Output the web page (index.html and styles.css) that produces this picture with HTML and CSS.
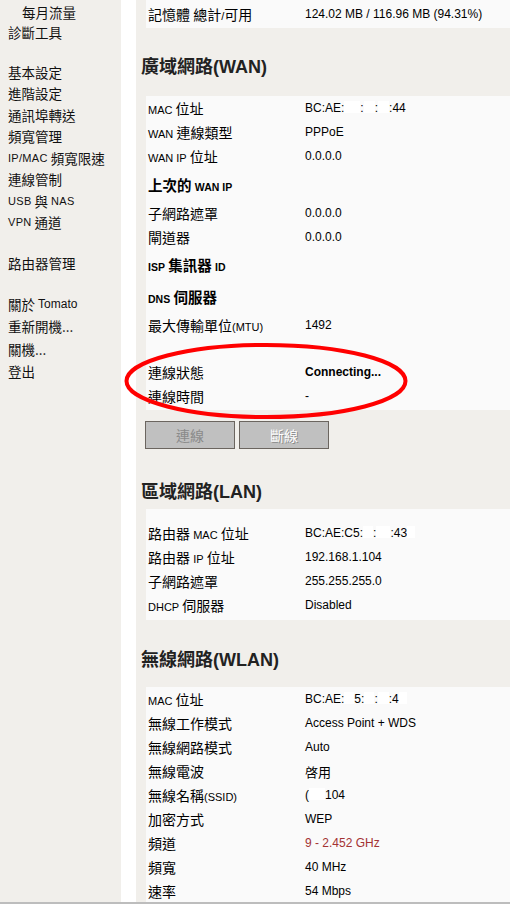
FILE: index.html
```html
<!DOCTYPE html>
<html lang="zh-Hant">
<head>
<meta charset="utf-8">
<title>Tomato 狀態</title>
<link rel="stylesheet" href="styles.css">
</head>
<body>
<div class="page">
  <nav class="sidebar">
    <div class="nav-group g1">
      <a class="nav-item sub">每月流量</a>
      <a class="nav-item">診斷工具</a>
    </div>
    <div class="nav-group g2">
      <a class="nav-item">基本設定</a>
      <a class="nav-item">進階設定</a>
      <a class="nav-item">通訊埠轉送</a>
      <a class="nav-item">頻寬管理</a>
      <a class="nav-item"><span class="en">IP/MAC</span> 頻寬限速</a>
      <a class="nav-item">連線管制</a>
      <a class="nav-item"><span class="en">USB</span> 與 <span class="en">NAS</span></a>
      <a class="nav-item"><span class="en">VPN</span> 通道</a>
    </div>
    <div class="nav-group g3">
      <a class="nav-item">路由器管理</a>
    </div>
    <div class="nav-group g4">
      <a class="nav-item">關於 <span class="en12">Tomato</span></a>
      <a class="nav-item">重新開機...</a>
      <a class="nav-item">關機...</a>
      <a class="nav-item">登出</a>
    </div>
  </nav>
  <div class="gutter"></div>
  <main class="content">
    <section class="panel panel-top">
      <div class="row"><span class="label">記憶體 總計<span class="en">/</span>可用</span><span class="value">124.02 MB / 116.96 MB (94.31%)</span></div>
    </section>

    <h2 class="heading h-wan">廣域網路(WAN)</h2>
    <section class="panel">
      <div class="row"><span class="label"><span class="en">MAC</span> 位址</span><span class="value">BC:AE:<span class="mask w16"></span>:<span class="mask w11"></span>:<span class="mask w11"></span>:44</span></div>
      <div class="row"><span class="label"><span class="en">WAN</span> 連線類型</span><span class="value">PPPoE</span></div>
      <div class="row"><span class="label"><span class="en">WAN IP</span> 位址</span><span class="value">0.0.0.0</span></div>
      <div class="row sub-head h33"><span class="label">上次的 <span class="en">WAN IP</span></span></div>
      <div class="row"><span class="label">子網路遮罩</span><span class="value">0.0.0.0</span></div>
      <div class="row"><span class="label">閘道器</span><span class="value">0.0.0.0</span></div>
      <div class="row sub-head h31"><span class="label"><span class="en">ISP</span> 集訊器 <span class="en">ID</span></span></div>
      <div class="row sub-head h33"><span class="label"><span class="en">DNS</span> 伺服器</span></div>
      <div class="row"><span class="label">最大傳輸單位<span class="en">(MTU)</span></span><span class="value">1492</span></div>
      <div class="row spacer"></div>
      <div class="row"><span class="label">連線狀態</span><span class="value strong">Connecting...</span></div>
      <div class="row"><span class="label">連線時間</span><span class="value">-</span></div>
    </section>

    <div class="buttons">
      <button class="btn" type="button" disabled>連線</button>
      <button class="btn btn-off" type="button" disabled>斷線</button>
    </div>

    <h2 class="heading h-lan">區域網路(LAN)</h2>
    <section class="panel panel-lan">
      <div class="row"><span class="label">路由器 <span class="en">MAC</span> 位址</span><span class="value">BC:AE:C5:<span class="mask w10"></span>:<span class="mask w14"></span>:43<span class="mask w8"></span></span></div>
      <div class="row"><span class="label">路由器 <span class="en">IP</span> 位址</span><span class="value">192.168.1.104</span></div>
      <div class="row"><span class="label">子網路遮罩</span><span class="value">255.255.255.0</span></div>
      <div class="row"><span class="label"><span class="en">DHCP</span> 伺服器</span><span class="value">Disabled</span></div>
    </section>

    <h2 class="heading h-wlan">無線網路(WLAN)</h2>
    <section class="panel">
      <div class="row"><span class="label"><span class="en">MAC</span> 位址</span><span class="value">BC:AE:<span class="mask w10"></span>5:<span class="mask w10"></span>:<span class="mask w11"></span>:4<span class="mask w8"></span></span></div>
      <div class="row"><span class="label">無線工作模式</span><span class="value">Access Point + WDS</span></div>
      <div class="row"><span class="label">無線網路模式</span><span class="value">Auto</span></div>
      <div class="row"><span class="label">無線電波</span><span class="value cjk">啓用</span></div>
      <div class="row"><span class="label">無線名稱<span class="en">(SSID)</span></span><span class="value">(<span class="mask w16"></span>104</span></div>
      <div class="row"><span class="label">加密方式</span><span class="value">WEP</span></div>
      <div class="row"><span class="label">頻道</span><span class="value channel">9 - 2.452 GHz</span></div>
      <div class="row"><span class="label">頻寬</span><span class="value">40 MHz</span></div>
      <div class="row"><span class="label">速率</span><span class="value">54 Mbps</span></div>
    </section>
  </main>

  <svg class="highlight" width="288" height="82" viewBox="0 0 288 82" aria-hidden="true">
    <ellipse cx="144" cy="40" rx="139.5" ry="36" fill="none" stroke="#ff0000" stroke-width="4"/>
  </svg>
</div>
<div class="window-edge"></div>
</body>
</html>
```

FILE: styles.css
```css
html, body {
  margin: 0;
  padding: 0;
}

body {
  background: #f1efeb;
  color: #000;
  font-family: "Noto Sans CJK TC", "Liberation Sans", sans-serif;
  overflow: hidden;
}

.page {
  position: relative;
  display: grid;
  grid-template-columns: 121px 15px 1fr;
  min-height: 100vh;
}

/* ---------- sidebar ---------- */
.sidebar {
  background: #f1efeb;
  display: flex;
  flex-direction: column;
  padding-left: 8px;
}

.nav-group {
  display: flex;
  flex-direction: column;
}

.nav-item {
  display: flex;
  align-items: center;
  font-size: 13.5px;
  color: #111;
  white-space: pre;
  text-decoration: none;
}

.nav-item.sub {
  padding-left: 14px;
}

.g1 { padding-top: 2px; }
.g1 .nav-item { height: 20px; }

.g2 { margin-top: 19px; }
.g2 .nav-item { height: 21.5px; }

.g3 { margin-top: 19px; }
.g3 .nav-item { height: 21.5px; }

.g4 { margin-top: 19px; }
.g4 .nav-item { height: 22.5px; }

.nav-item .en {
  font-family: "Liberation Sans", sans-serif;
  font-size: 11px;
  letter-spacing: 0.3px;
}

.nav-item .en12 {
  font-family: "Liberation Sans", sans-serif;
  font-size: 12px;
}

.gutter {
  background: #ffffff;
}

/* ---------- content ---------- */
.content {
  display: flex;
  flex-direction: column;
  padding-left: 5px;
  background: #f1efeb;
}

.heading {
  margin: 0;
  height: 24px;
  line-height: 24px;
  font-family: "Liberation Sans", "Noto Sans CJK TC", sans-serif;
  font-size: 18px;
  font-weight: bold;
  color: #222;
  white-space: nowrap;
}

.h-wan  { margin-top: 27px; margin-bottom: 17px; }
.h-lan  { margin-top: 31px; margin-bottom: 5px; }
.h-wlan { margin-top: 28px; margin-bottom: 15px; }

.panel {
  margin-left: 5px;
  background: #fafafa;
  padding-bottom: 2px;
}

.panel-top {
  padding-top: 2px;
}

.panel-lan {
  padding-top: 12px;
  padding-bottom: 3px;
}

.row {
  display: grid;
  grid-template-columns: 157px 1fr;
  align-items: center;
  height: 24px;
  padding-left: 2px;
}

.row.h33 { height: 33px; }
.row.h31 { height: 31px; }
.row.spacer { height: 23px; }

.label {
  font-size: 14px;
  white-space: nowrap;
  color: #000;
}

.label .en {
  font-family: "Liberation Sans", sans-serif;
  font-size: 11px;
}

.sub-head .label {
  font-weight: bold;
  font-size: 14.5px;
}

.sub-head .label .en {
  font-size: 10.5px;
}

.value {
  font-family: "Liberation Sans", "Noto Sans CJK TC", sans-serif;
  font-size: 12px;
  white-space: nowrap;
  color: #000;
}

.value.cjk {
  font-family: "Noto Sans CJK TC", sans-serif;
  font-size: 13px;
}

.value.strong {
  font-weight: bold;
}

.value.channel {
  color: #a33333;
}

.mask {
  display: inline-block;
  height: 12px;
  vertical-align: -1px;
  background: #ffffff;
}

.w8  { width: 8px; }
.w10 { width: 10px; }
.w11 { width: 11px; }
.w14 { width: 14px; }
.w16 { width: 16px; }

/* ---------- buttons ---------- */
.buttons {
  display: flex;
  gap: 4px;
  margin-top: 11px;
  margin-left: 4px;
}

.btn {
  width: 90px;
  height: 28px;
  padding: 0;
  background: #c0c0c0;
  border: 1px solid #6b655f;
  border-radius: 0;
  font-family: "Noto Sans CJK TC", sans-serif;
  font-size: 14px;
  color: #8a8a8a;
}

.btn-off {
  color: #ffffff;
  text-shadow: 1px 1px 0 #8a8a8a;
}

/* ---------- overlay ---------- */
.highlight {
  position: absolute;
  left: 122px;
  top: 341px;
}

.window-edge {
  position: fixed;
  left: 0;
  right: 0;
  bottom: 0;
  height: 2px;
  background: #bdbdbd;
}
```
